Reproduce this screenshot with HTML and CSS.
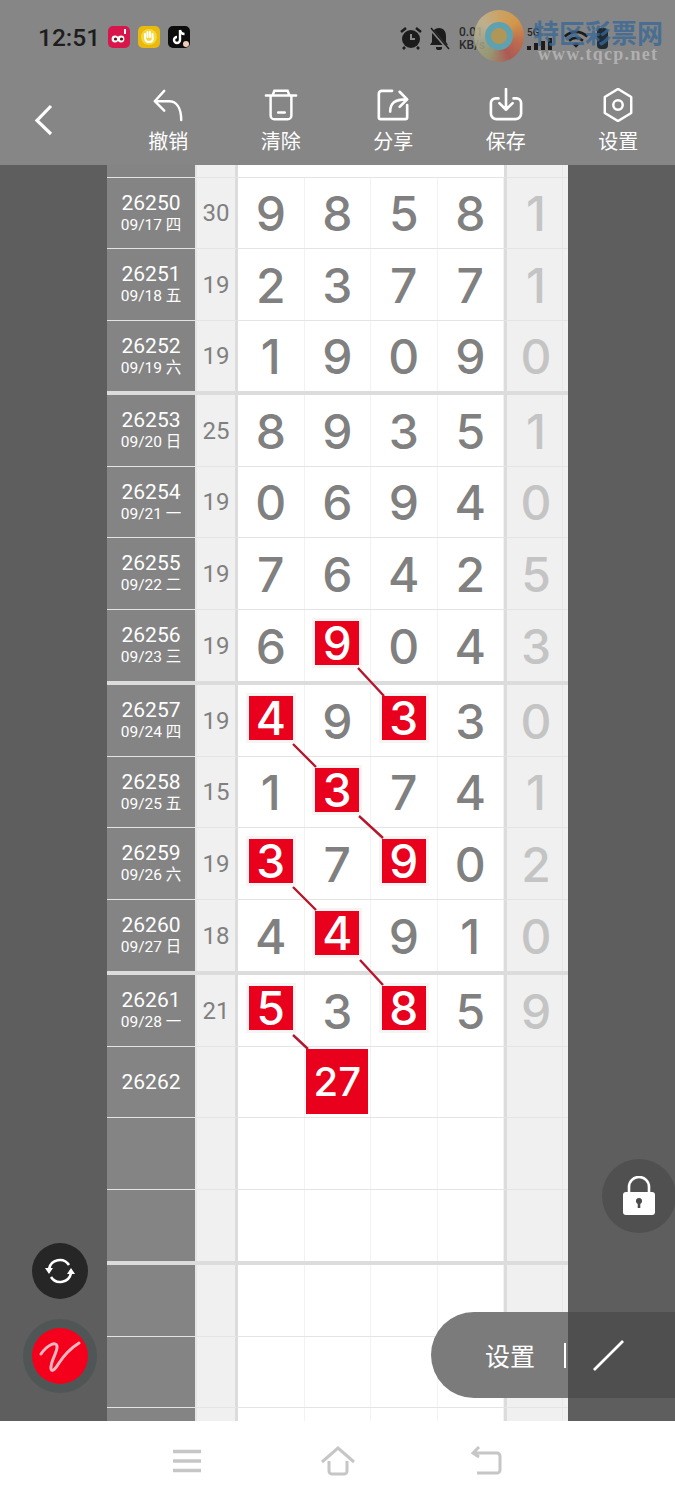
FILE: index.html
```html
<!DOCTYPE html>
<html lang="zh">
<head>
<meta charset="utf-8">
<title>走势图</title>
<link rel="stylesheet" href="styles.css">
</head>
<body>
<header class="top">
  <div class="status">
    <div class="status-left">
      <span class="time">12:51</span>
      <svg class="app" viewBox="0 0 22 22"><rect width="22" height="22" rx="5" fill="#d8164c"/><circle cx="7" cy="13" r="3.4" fill="#fff"/><circle cx="13" cy="13" r="3.4" fill="#fff"/><circle cx="7.5" cy="13" r="1.6" fill="#611"/><circle cx="13.5" cy="13" r="1.6" fill="#611"/><path d="M17 3v5" stroke="#fff" stroke-width="2"/></svg>
      <svg class="app" viewBox="0 0 22 22"><rect width="22" height="22" rx="5" fill="#e9b90e"/><circle cx="11" cy="11" r="8" fill="#f6d83a"/><path d="M7 11V8M9.500 11V6M12 11V6M14.500 12V8M7 11c0 4 2 5 4 5s4-1 4-4" stroke="#fff" stroke-width="2" fill="none" stroke-linecap="round"/></svg>
      <svg class="app" viewBox="0 0 22 22"><rect width="22" height="22" rx="5" fill="#0c0c0c"/><path d="M12 4v10a3 3 0 1 1-3-3M12 4c.5 2.500 2 4 4.500 4" stroke="#fff" stroke-width="2.400" fill="none"/><circle cx="18" cy="18" r="3" fill="#f3c9b8"/></svg>
    </div>
    <div class="status-right">
      <svg class="sicon" viewBox="0 0 24 24"><circle cx="12" cy="13" r="9" fill="#1c1c1c"/><path d="M2 6l5-4M22 6l-5-4M6 21l-2 2M18 21l2 2" stroke="#1c1c1c" stroke-width="2.500"/><path d="M12 8v5h4" stroke="#888" stroke-width="2" fill="none"/></svg>
      <svg class="sicon" viewBox="0 0 24 24"><path d="M12 2c5 0 7 4 7 8v6l2 3H3l2-3v-6c0-4 2-8 7-8zM9 21h6v1a3 2 0 0 1-6 0z" fill="#1c1c1c"/><path d="M3 2l18 21" stroke="#888" stroke-width="3"/><path d="M4 2l18 21" stroke="#1c1c1c" stroke-width="1.500"/></svg>
      <div class="speed"><span>0.01</span><span>KB/s</span></div>
      <div class="signal"><span class="five-g">5G</span><div class="bars"><i class="bar-a"></i><i class="bar-b"></i><i class="bar-c"></i><i class="bar-d"></i></div></div>
      <svg class="wifi" viewBox="0 0 30 20"><path d="M2 7c8-7 18-7 26 0M7 12c5-4 11-4 16 0" stroke="#1c1c1c" stroke-width="3" fill="none"/><path d="M15 20l-4-4c2-2 6-2 8 0z" fill="#1c1c1c"/></svg>
      <span class="battery"></span>
    </div>
  </div>
  <nav class="toolbar">
    <button class="back" aria-label="返回"><svg viewBox="0 0 20 32"><path d="M17 2L3 16.500 17 30" fill="none" stroke="#fff" stroke-width="3.200"/></svg></button>
    <div class="tool"><svg viewBox="0 0 36 36"><path d="M14 3L4 14l10 10M4 14h15c8 0 13 7 13 20" fill="none" stroke="#fff" stroke-width="2.600" stroke-linejoin="round" stroke-linecap="round"/></svg><span>撤销</span></div>
    <div class="tool"><svg viewBox="0 0 36 36"><path d="M2 8h32M9 8l2-5h14l2 5M7 9v20a4 4 0 0 0 4 4h14a4 4 0 0 0 4-4V9M15 26h7" fill="none" stroke="#fff" stroke-width="2.600" stroke-linecap="round"/></svg><span>清除</span></div>
    <div class="tool"><svg viewBox="0 0 36 36"><path d="M17 3H6a3 3 0 0 0-3 3v25a2 2 0 0 0 2 2h26a2 2 0 0 0 2-2V18M15 25c0-9 5-13 17-13M25 4l8 8-8 8" fill="none" stroke="#fff" stroke-width="2.800" stroke-linecap="round" stroke-linejoin="round"/></svg><span>分享</span></div>
    <div class="tool"><svg viewBox="0 0 36 36"><path d="M10 11H7a5 5 0 0 0-5 5v11a6 6 0 0 0 6 6h20a6 6 0 0 0 6-6V16a5 5 0 0 0-5-5h-3M18 1v22M11 16l7 7 7-7" fill="none" stroke="#fff" stroke-width="2.800" stroke-linecap="round" stroke-linejoin="round"/></svg><span>保存</span></div>
    <div class="tool"><svg viewBox="0 0 36 36"><path d="M18 1l14 8.500v17L18 35 4 26.500v-17z" fill="none" stroke="#fff" stroke-width="2.600" stroke-linejoin="round"/><circle cx="18" cy="18" r="5" fill="none" stroke="#fff" stroke-width="2.600"/></svg><span>设置</span></div>
  </nav>
</header>

<main class="stage">
  <div class="board">
    <div class="row row-stub"><div class="label"></div><div class="sum"></div><div></div><div></div><div></div><div></div><div class="rem"></div></div>

    <div class="row"><div class="label"><b>26250</b><span>09/17 四</span></div><div class="sum">30</div><div class="num">9</div><div class="num">8</div><div class="num">5</div><div class="num">8</div><div class="rem">1</div></div>
    <div class="row"><div class="label"><b>26251</b><span>09/18 五</span></div><div class="sum">19</div><div class="num">2</div><div class="num">3</div><div class="num">7</div><div class="num">7</div><div class="rem">1</div></div>
    <div class="row row-end-first"><div class="label"><b>26252</b><span>09/19 六</span></div><div class="sum">19</div><div class="num">1</div><div class="num">9</div><div class="num">0</div><div class="num">9</div><div class="rem">0</div></div>

    <div class="row"><div class="label"><b>26253</b><span>09/20 日</span></div><div class="sum">25</div><div class="num">8</div><div class="num">9</div><div class="num">3</div><div class="num">5</div><div class="rem">1</div></div>
    <div class="row"><div class="label"><b>26254</b><span>09/21 一</span></div><div class="sum">19</div><div class="num">0</div><div class="num">6</div><div class="num">9</div><div class="num">4</div><div class="rem">0</div></div>
    <div class="row"><div class="label"><b>26255</b><span>09/22 二</span></div><div class="sum">19</div><div class="num">7</div><div class="num">6</div><div class="num">4</div><div class="num">2</div><div class="rem">5</div></div>
    <div class="row row-end"><div class="label"><b>26256</b><span>09/23 三</span></div><div class="sum">19</div><div class="num">6</div><div class="num"><em>9</em></div><div class="num">0</div><div class="num">4</div><div class="rem">3</div></div>

    <div class="row"><div class="label"><b>26257</b><span>09/24 四</span></div><div class="sum">19</div><div class="num"><em>4</em></div><div class="num">9</div><div class="num"><em>3</em></div><div class="num">3</div><div class="rem">0</div></div>
    <div class="row"><div class="label"><b>26258</b><span>09/25 五</span></div><div class="sum">15</div><div class="num">1</div><div class="num"><em>3</em></div><div class="num">7</div><div class="num">4</div><div class="rem">1</div></div>
    <div class="row"><div class="label"><b>26259</b><span>09/26 六</span></div><div class="sum">19</div><div class="num"><em>3</em></div><div class="num">7</div><div class="num"><em>9</em></div><div class="num">0</div><div class="rem">2</div></div>
    <div class="row row-end"><div class="label"><b>26260</b><span>09/27 日</span></div><div class="sum">18</div><div class="num">4</div><div class="num"><em>4</em></div><div class="num">9</div><div class="num">1</div><div class="rem">0</div></div>

    <div class="row"><div class="label"><b>26261</b><span>09/28 一</span></div><div class="sum">21</div><div class="num"><em>5</em></div><div class="num">3</div><div class="num"><em>8</em></div><div class="num">5</div><div class="rem">9</div></div>
    <div class="row"><div class="label"><b>26262</b></div><div class="sum"></div><div class="num"></div><div class="num"><em class="total">27</em></div><div class="num"></div><div class="num"></div><div class="rem"></div></div>
    <div class="row"><div class="label"></div><div class="sum"></div><div class="num"></div><div class="num"></div><div class="num"></div><div class="num"></div><div class="rem"></div></div>
    <div class="row row-end"><div class="label"></div><div class="sum"></div><div class="num"></div><div class="num"></div><div class="num"></div><div class="num"></div><div class="rem"></div></div>

    <div class="row"><div class="label"></div><div class="sum"></div><div class="num"></div><div class="num"></div><div class="num"></div><div class="num"></div><div class="rem"></div></div>
    <div class="row"><div class="label"></div><div class="sum"></div><div class="num"></div><div class="num"></div><div class="num"></div><div class="num"></div><div class="rem"></div></div>
    <div class="row"><div class="label"></div><div class="sum"></div><div class="num"></div><div class="num"></div><div class="num"></div><div class="num"></div><div class="rem"></div></div>
  </div>

  <button class="fab fab-sync" aria-label="刷新"><svg viewBox="0 0 32 32"><path d="M5 14A11 11 0 0 1 25 10M27 18A11 11 0 0 1 7 22" fill="none" stroke="#fff" stroke-width="2.600"/><path d="M1 13h8l-4 6zM31 19h-8l4-6z" fill="#fff"/></svg></button>
  <button class="fab fab-pen" aria-label="画笔"><svg viewBox="0 0 56 56"><path d="M9 26c6-9 15-13 16-8 1 6-7 15-6 23 1 4 5-1 8-6 6-9 12-15 20-20" fill="none" stroke="#f7b6c0" stroke-width="3" stroke-linecap="round"/></svg></button>
  <button class="fab fab-lock" aria-label="锁定"><svg viewBox="0 0 34 40"><path d="M7 18V11a10 10 0 0 1 20 0v7" fill="none" stroke="#fff" stroke-width="2.600"/><rect x="1" y="16" width="32" height="23" rx="3" fill="#fff"/><circle cx="17" cy="25" r="3" fill="#4a4a4a"/><path d="M15.700 26h2.600v6h-2.600z" fill="#4a4a4a"/></svg></button>
  <div class="pill"><span class="pill-text">设置</span><i class="pill-rule"></i><svg class="pill-line" viewBox="0 0 32 32"><path d="M1 31L31 1" stroke="#fff" stroke-width="2.800"/></svg></div>
</main>

<footer class="nav">
  <svg class="nav-menu" viewBox="0 0 28 24"><path d="M0 2.500h28M0 12h28M0 21.500h28" stroke="#c6c6c6" stroke-width="3.600"/></svg>
  <svg class="nav-home" viewBox="0 0 36 30"><path d="M2 16L18 2l16 14M9 15v10a3 3 0 0 0 3 3h12a3 3 0 0 0 3-3V15" fill="none" stroke="#c6c6c6" stroke-width="3"/></svg>
  <svg class="nav-back" viewBox="0 0 32 30"><path d="M2 7h24a3 3 0 0 1 3 3v14a3 3 0 0 1-3 3H6M8 1L2 7l6 4" fill="none" stroke="#c6c6c6" stroke-width="3"/></svg>
</footer>

<svg class="links" viewBox="0 0 675 1500" aria-hidden="true">
  <path d="M358 668L384 696M293 744L316 767M359 816L383 838M293 887L316 910M360 960L383 985M293 1035L308 1049"/>
</svg>

<div class="mark">
  <div class="mark-logo"><i></i></div>
  <div class="mark-text"><strong>特区彩票网</strong><span>www.tqcp.net</span></div>
</div>
</body>
</html>
```

FILE: styles.css
```css
* { box-sizing: border-box; }
html, body { margin: 0; padding: 0; }
body {
  position: relative;
  width: 675px;
  height: 1500px;
  overflow: hidden;
  display: flex;
  flex-direction: column;
  background: #fff;
  font-family: Inter, "Noto Sans CJK SC", sans-serif;
}
button { border: 0; padding: 0; background: none; }
svg { display: block; }

.top { height: 165px; flex: none; background: #868686; }
.status {
  height: 75px;
  display: flex;
  justify-content: space-between;
  padding: 26px 67px 0 38px;
}
.status-left { display: flex; align-items: flex-start; gap: 8px; }
.time { font: 500 24.500px/24px Roboto, sans-serif; color: #1d1d1d; }
.app { width: 22px; height: 22px; }
.status-right { display: flex; align-items: flex-start; }
.sicon { width: 24px; height: 24px; margin-right: 4px; }
.speed {
  display: flex; flex-direction: column;
  margin-left: 4px;
  font: 500 12px/13px Roboto, sans-serif;
  color: #2a2a2a;
  width: 68px;
}
.signal { width: 30px; margin-top: 1px; }
.five-g { display: block; font: 500 10px/11px Roboto, sans-serif; color: #222; }
.bars { display: flex; gap: 3px; align-items: flex-end; height: 12px; }
.bars i { width: 4px; background: #1c1c1c; }
.bar-a { height: 4px; }
.bar-b { height: 7px; }
.bar-c { height: 9px; }
.bar-d { height: 12px; }
.wifi { width: 26px; height: 18px; margin: 4px 0 0 6px; }
.battery { width: 11px; height: 21px; margin: 2px 0 0 8px; background: #1f2c36; border-radius: 4px; }

.toolbar { height: 90px; display: flex; position: relative; padding-left: 112px; }
.back { position: absolute; left: 34px; top: 29px; width: 20px; height: 32px; }
.tool {
  width: 112.500px;
  display: flex; flex-direction: column; align-items: center;
  color: #fff;
  font: 400 20px/24px "Noto Sans CJK SC", sans-serif;
}
.tool svg { width: 34px; height: 34px; margin-top: 13px; margin-bottom: 6px; }
.tool span { margin-top: 1px; }

.stage {
  position: relative;
  flex: none;
  height: 1256px;
  overflow: hidden;
  background: #5e5e5e;
  padding-left: 107px;
}
.board { width: 461px; height: 1256px; overflow: hidden; background: #fff; }
.row {
  display: grid;
  grid-template-columns: 88px 43px repeat(4, 66.500px) 64px;
  grid-template-rows: minmax(0, 1fr);
  height: 71.500px;
  border-bottom: 1px solid #e4e4e4;
}
.row-stub { height: 12.500px; }
.row-end { height: 75.500px; border-bottom: 4px solid #dcdcdc; }
.row-end-first { height: 74.500px; border-bottom: 4px solid #dcdcdc; }

.label {
  background: #848484;
  color: #fff;
  display: flex; flex-direction: column; align-items: center; justify-content: center;
}
.label b { font: 400 21px/24px Roboto, "Noto Sans CJK SC", sans-serif; }
.label span { font: 400 15.500px/20px Roboto, "Noto Sans CJK SC", sans-serif; }

.sum {
  display: flex; align-items: center; justify-content: center;
  background: #f0f0f0;
  border-left: 2px solid #e6e6e6;
  border-right: 3px solid #dcdcdc;
  color: #808080;
  font-size: 24px;
  padding-top: 1px;
  font-family: Roboto, sans-serif;
}
.num {
  display: flex; align-items: center; justify-content: center;
  border-right: 1px solid #f2f2f2;
  color: #808080;
  font: 500 48px/1 Inter, sans-serif;
  padding-top: 3px;
}
.num em {
  width: 44px; height: 44px;
  display: flex; align-items: center; justify-content: center;
  background: #e8001c;
  color: #fff;
  font-style: normal;
  font-weight: 500;
  font-size: 46px;
  box-shadow: 0 0 0 3px #f8f4f4;
  margin-bottom: 7px;
}
.num em.total {
  width: 62px; height: 65px; flex: none;
  font-size: 40px;
  margin-bottom: 3px;
  box-shadow: none;
}
.rem {
  display: flex; align-items: center; justify-content: center;
  background: linear-gradient(90deg, #f0f0f0 calc(100% - 6px), #e8e8e8 0, #e8e8e8 calc(100% - 5px), #f0f0f0 0);
  border-left: 3px solid #dcdcdc;
  color: #c4c4c4;
  font: 500 48px/1 Inter, sans-serif;
  padding-top: 3px;
  padding-right: 3px;
}

.fab { position: absolute; border-radius: 50%; display: flex; align-items: center; justify-content: center; }
.fab-sync { left: 32px; top: 1078px; width: 56px; height: 56px; background: #262626; }
.fab-sync svg { width: 32px; height: 32px; }
.fab-pen {
  left: 32px; top: 1163px; width: 56px; height: 56px;
  background: #f5001c;
  box-shadow: 0 0 0 9px #505555;
}
.fab-pen svg { width: 56px; height: 56px; }
.fab-lock { left: 602px; top: 994px; width: 74px; height: 74px; background: #505050; }
.fab-lock svg { width: 34px; height: 40px; }
.pill {
  position: absolute;
  left: 431px; top: 1147px;
  width: 244px; height: 86px;
  border-radius: 43px 0 0 43px;
  background: linear-gradient(90deg, #7b7b7b 137px, #4f4f4f 137px);
  display: flex; align-items: center;
  color: #fff;
  padding-left: 54px;
}
.pill-text { font: 400 25px/1 "Noto Sans CJK SC", sans-serif; width: 79px; }
.pill-rule { width: 2px; height: 25px; background: #fff; margin-right: 27px; }
.pill-line { width: 31px; height: 31px; }

.nav {
  position: relative;
  flex: none;
  height: 79px;
  display: flex;
  align-items: center;
  justify-content: space-between;
  padding: 0 172px 0 173px;
  background: #fff;
}
.nav-menu { width: 28px; height: 24px; }
.nav-home { width: 36px; height: 30px; margin-left: 4px; }
.nav-back { width: 32px; height: 30px; }

.links { position: absolute; inset: 0; width: 675px; height: 1500px; pointer-events: none; }
.links path { stroke: #b5162c; stroke-width: 2.400px; fill: none; }

.mark { position: absolute; left: 474px; top: 10px; display: flex; gap: 9px; pointer-events: none; }
.mark-logo {
  width: 50px; height: 52px; border-radius: 50%;
  display: flex; align-items: center; justify-content: center;
  background: conic-gradient(#d8a860, #e09a40, #c86a44, #b4524c, #9a9a70, #a8a88c, #c8b890, #d8a860);
  opacity: .85;
}
.mark-logo i { display: block; width: 28px; height: 28px; border-radius: 50%; border: 6px solid #58a6b8; background: #b89a50; }
.mark-text { display: flex; flex-direction: column; align-items: center; padding-top: 7px; }
.mark-text strong { font: 700 26px/29px "Noto Sans CJK SC", sans-serif; color: rgba(56, 104, 150, .8); white-space: nowrap; }
.mark-text span { font: 700 18px/17px "Liberation Serif", serif; letter-spacing: 1.300px; color: #b0b0b0; }
```
